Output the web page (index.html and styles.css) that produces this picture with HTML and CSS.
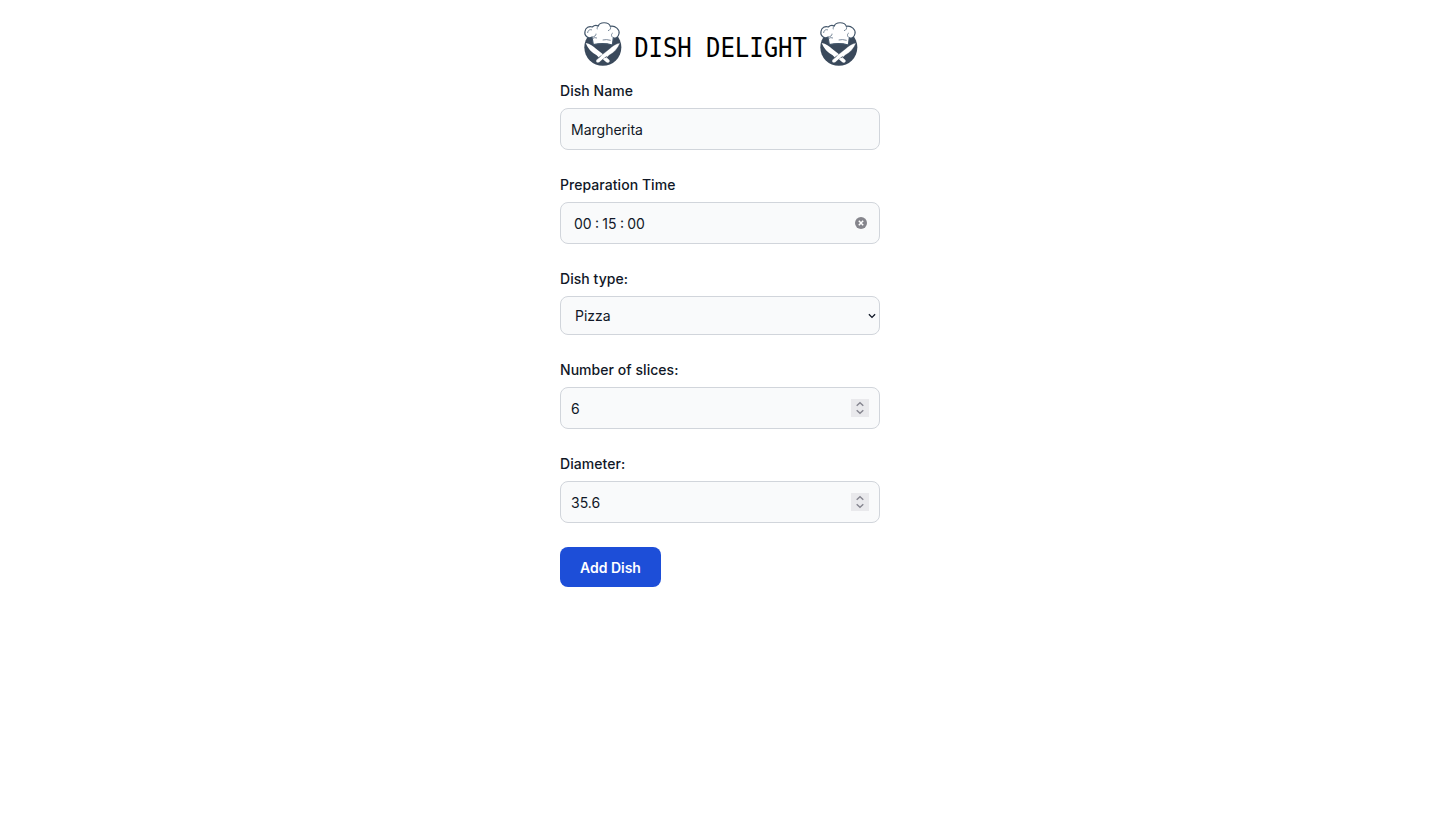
FILE: index.html
```html
<!DOCTYPE html>
<html lang="en">
<head>
<meta charset="utf-8">
<title>Dish Delight</title>
<link rel="stylesheet" href="styles.css">
</head>
<body>
<svg width="0" height="0" class="defs" aria-hidden="true">
  <symbol id="chef" viewBox="24 18 120 138">
    <circle cx="83.500" cy="97" r="55.500" fill="#3a495b"/>
    <path d="M55 89 L51 66 C38 73 27 61 30 49 C31 38 43 32 52 36 C57 31 64 30 70 33 C74 20 101 20 106 34 C121 31 135 44 132 56 C130 67 121 71 115 68 L112 90 Q84 82 55 89Z" fill="#fff" stroke="#43566a" stroke-width="3.500" stroke-linejoin="round"/>
    <path d="M38 54 C38 46 45 42 51 45 M70 33 C66 37 66 40 67 43 M106 34 C109 40 105 46 99 47 M115 68 C108 65 108 57 113 54 M51 66 C58 66 64 61 63 56" fill="none" stroke="#5f7285" stroke-width="2.500"/>
    <path d="M52 71 Q59 66 66 69 M83 75 Q94 72 107 76" fill="none" stroke="#64758a" stroke-width="2.500"/>
    <path d="M32 84 C44 86 56 94 63 101 L84 118 L103 135 C107 140 100 146 94 142 L77 127 L73 129 L65 121 C50 113 38 100 32 84Z" fill="#fff"/>
    <path d="M135 84 C123 86 111 94 104 101 L83 118 L64 135 C60 140 67 146 73 142 L90 127 L94 129 L102 121 C117 113 129 100 135 84Z" fill="#fff" stroke="#3a495b" stroke-width="1"/>
    <path d="M71 128l6-5m13 5 6-4" stroke="#3a495b" stroke-width="2"/>
  </symbol>
  <symbol id="stepper" viewBox="0 0 18 18">
    <path fill="#e9e9ec" d="M0 0h18v18H0z"/>
    <path d="M5.700 6.800 9 3.800l3.300 3M5.700 11.200l3.300 3 3.300-3" fill="none" stroke="#85858f" stroke-width="1.400"/>
  </symbol>
</svg>
<main class="page">
  <header class="brand">
    <svg class="logo"><use href="#chef"/></svg>
    <h1 class="title">DISH DELIGHT</h1>
    <svg class="logo"><use href="#chef"/></svg>
  </header>
  <form class="form">
    <div class="group">
      <label class="label" for="name">Dish Name</label>
      <div class="field"><input class="input" id="name" value="Margherita"></div>
    </div>
    <div class="group">
      <label class="label" for="time">Preparation Time</label>
      <div class="field time"><input class="input" id="time" value="00 : 15 : 00">
        <svg class="clear" viewBox="0 0 12 12"><circle cx="6" cy="6" r="6" fill="#85858c"/><path d="m3.800 3.800 4.400 4.400m0-4.400-4.400 4.400" stroke="#fff" stroke-width="1.500"/></svg>
      </div>
    </div>
    <div class="group">
      <label class="label" for="type">Dish type:</label>
      <div class="field choice"><select class="input" id="type"><option>Pizza</option></select>
        <svg class="chevron" viewBox="0 0 8 6"><path d="m.9 1.200 3.100 3.200 3.100-3.200" fill="none" stroke="#111827" stroke-width="1.300"/></svg>
      </div>
    </div>
    <div class="group">
      <label class="label" for="slices">Number of slices:</label>
      <div class="field"><input class="input" id="slices" value="6"><svg class="stepper"><use href="#stepper"/></svg></div>
    </div>
    <div class="group">
      <label class="label" for="diameter">Diameter:</label>
      <div class="field"><input class="input" id="diameter" value="35.6"><svg class="stepper"><use href="#stepper"/></svg></div>
    </div>
    <button class="submit" type="button">Add Dish</button>
  </form>
</main>
</body>
</html>
```
FILE: styles.css
```css
* { box-sizing: border-box; }
body { margin: 0; background: #fff; color: #111827; font-family: Inter, sans-serif; }
.defs { display: block; }
.page { width: 320px; margin: 0 auto; padding-top: 21px; }
.brand { display: flex; justify-content: center; gap: 12px; height: 46px; padding-left: 2px; }
.logo { width: 40px; height: 46px; flex: none; }
.title {
  margin: 7px 0 0; color: #000; white-space: nowrap;
  font: 400 24px/41px "DejaVu Sans Mono", monospace;
  letter-spacing: -0.07px; transform: translateX(-0.5px) scaleY(1.08);
}
.form { padding-top: 13px; }
.group { margin-bottom: 24px; }
.label { display: block; margin-bottom: 6px; font-size: 14px; line-height: 22px; font-weight: 500; letter-spacing: 0.05px; }
.field {
  display: flex; align-items: center; height: 42px; padding: 0 10px;
  border: 1px solid #d1d5db; border-radius: 8px; background: #f9fafb;
}
.input {
  flex: 1; min-width: 0; height: 20px; margin: 2px 0 0; padding: 0; border: 0; outline: 0;
  appearance: none; background: transparent; color: #111827;
  font: 400 14px/20px Inter, sans-serif;
}
.time { padding: 0 12px 0 13px; }
.time .input { word-spacing: -0.6px; }
.clear { width: 12px; height: 12px; margin-bottom: 1px; }
.choice { height: 39px; padding: 0 3.5px 0 14px; }
.choice .input { margin-top: 0; }
.chevron { width: 8px; height: 6px; }
.stepper { width: 18px; height: 18px; }
.submit {
  display: block; width: 101px; height: 40px; padding: 2px 0 0; border: 0; border-radius: 8px;
  background: #1d4ed8; color: #fff; font: 600 14px/20px Inter, sans-serif; letter-spacing: -0.03px;
}
```
